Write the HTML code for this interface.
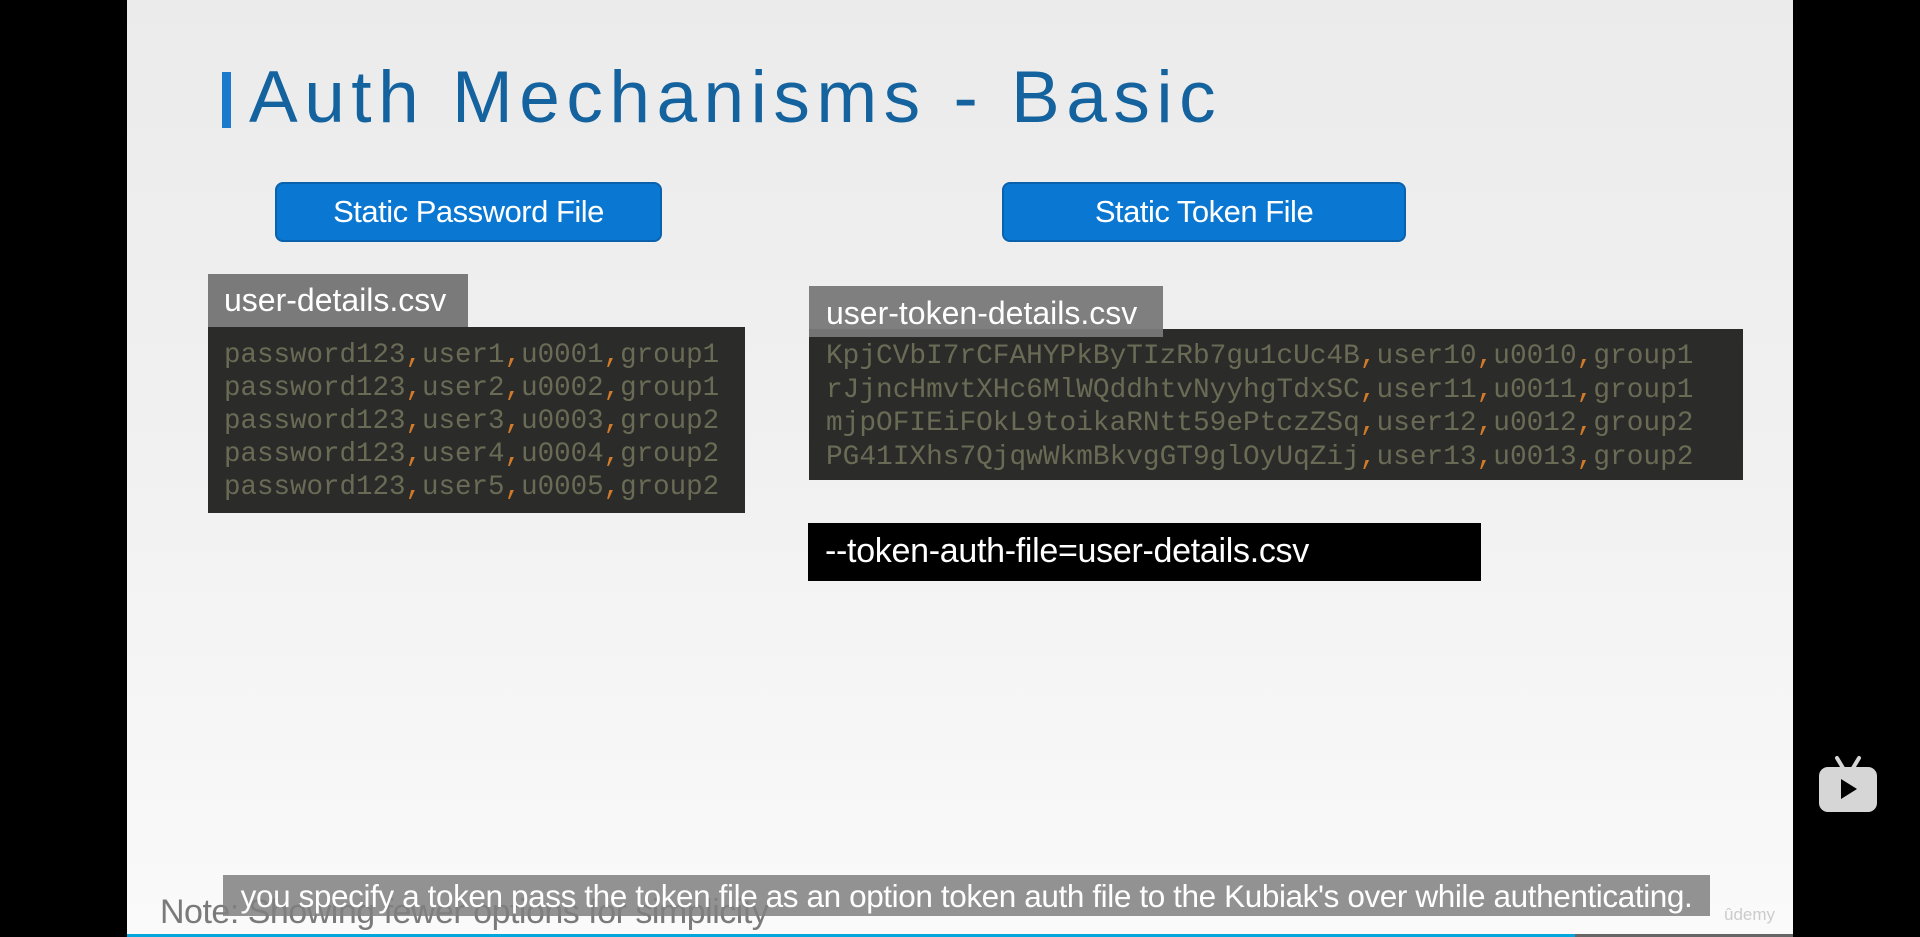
<!DOCTYPE html>
<html><head><meta charset="utf-8"><style>
*{margin:0;padding:0;box-sizing:border-box}
body{width:1920px;height:937px;background:#000;position:relative;overflow:hidden;font-family:"Liberation Sans",sans-serif}
.slide{position:absolute;left:127px;top:0;width:1666px;height:937px;background:linear-gradient(#ebebeb,#f1f1f1 50%,#fafafa)}
.abs{position:absolute}
.btn{position:absolute;background:#0a78d2;border:2px solid #0a62ad;border-radius:8px;color:#fff;font-size:31px;text-align:center;line-height:56px;letter-spacing:-0.5px}
.tab{position:absolute;background:#7a7a7a;color:#fff;font-size:32px;white-space:nowrap}
.code{position:absolute;background:#2b2b2a;font-family:"Liberation Mono",monospace;color:#6a6b55;white-space:pre}
.code i{font-style:normal;color:#d07a2a}
</style></head><body>
<div class="slide"></div>
<div class="abs" style="left:222px;top:72px;width:9px;height:56px;background:#1a7acc"></div>
<div class="abs" style="left:249px;top:61px;font-size:73px;line-height:73px;color:#14639f;letter-spacing:6.5px;white-space:nowrap">Auth Mechanisms - Basic</div>
<div class="btn" style="left:275px;top:182px;width:387px;height:60px">Static Password File</div>
<div class="btn" style="left:1002px;top:182px;width:404px;height:60px">Static Token File</div>
<div class="tab" style="left:208px;top:274px;width:260px;height:53px;line-height:52px;padding-left:16px">user-details.csv</div>
<div class="code" style="left:208px;top:327px;width:537px;height:186px;padding:12px 0 0 16px;font-size:27.5px;line-height:33px">password123<i>,</i>user1<i>,</i>u0001<i>,</i>group1
password123<i>,</i>user2<i>,</i>u0002<i>,</i>group1
password123<i>,</i>user3<i>,</i>u0003<i>,</i>group2
password123<i>,</i>user4<i>,</i>u0004<i>,</i>group2
password123<i>,</i>user5<i>,</i>u0005<i>,</i>group2</div>
<div class="code" style="left:809px;top:329px;width:934px;height:151px;padding:11px 0 0 17px;font-size:27.8px;line-height:33.5px">KpjCVbI7rCFAHYPkByTIzRb7gu1cUc4B<i>,</i>user10<i>,</i>u0010<i>,</i>group1
rJjncHmvtXHc6MlWQddhtvNyyhgTdxSC<i>,</i>user11<i>,</i>u0011<i>,</i>group1
mjpOFIEiFOkL9toikaRNtt59ePtczZSq<i>,</i>user12<i>,</i>u0012<i>,</i>group2
PG41IXhs7QjqwWkmBkvgGT9glOyUqZij<i>,</i>user13<i>,</i>u0013<i>,</i>group2</div>
<div class="tab" style="left:809px;top:286px;width:354px;height:51px;line-height:54px;padding-left:17px;background:rgba(120,120,120,0.95)">user-token-details.csv</div>
<div class="abs" style="left:808px;top:523px;width:673px;height:58px;background:#000;color:#fff;font-size:34px;line-height:56px;padding-left:17px;letter-spacing:-0.3px;white-space:nowrap">--token-auth-file=user-details.csv</div>
<div class="abs" style="left:160px;top:893px;font-size:34px;color:#7a7a7a;letter-spacing:-0.5px;white-space:nowrap">Note: Showing fewer options for simplicity</div>
<div class="abs" style="left:223px;top:875px;width:1487px;height:41px;background:rgba(128,128,128,0.85);color:#fff;font-size:31.5px;line-height:42px;text-align:center;letter-spacing:-0.4px;white-space:nowrap">you specify a token pass the token file as an option token auth file to the Kubiak's over while authenticating.</div>
<div class="abs" style="left:1724px;top:905px;font-size:17px;color:#ccc">ûdemy</div>
<div class="abs" style="left:127px;top:934px;width:1448px;height:3px;background:#00a6dc"></div>
<div class="abs" style="left:1575px;top:934px;width:218px;height:3px;background:#666"></div>
<svg class="abs" style="left:1817px;top:754px" width="62" height="60" viewBox="0 0 62 60">
<path d="M20 4 L26 14 M42 4 L36 14" stroke="#d6d6d6" stroke-width="4" stroke-linecap="round"/>
<rect x="2" y="13" width="58" height="45" rx="9" fill="#d6d6d6"/>
<path d="M24 25 L40 35 L24 45 Z" fill="#000"/>
</svg>
</body></html>
